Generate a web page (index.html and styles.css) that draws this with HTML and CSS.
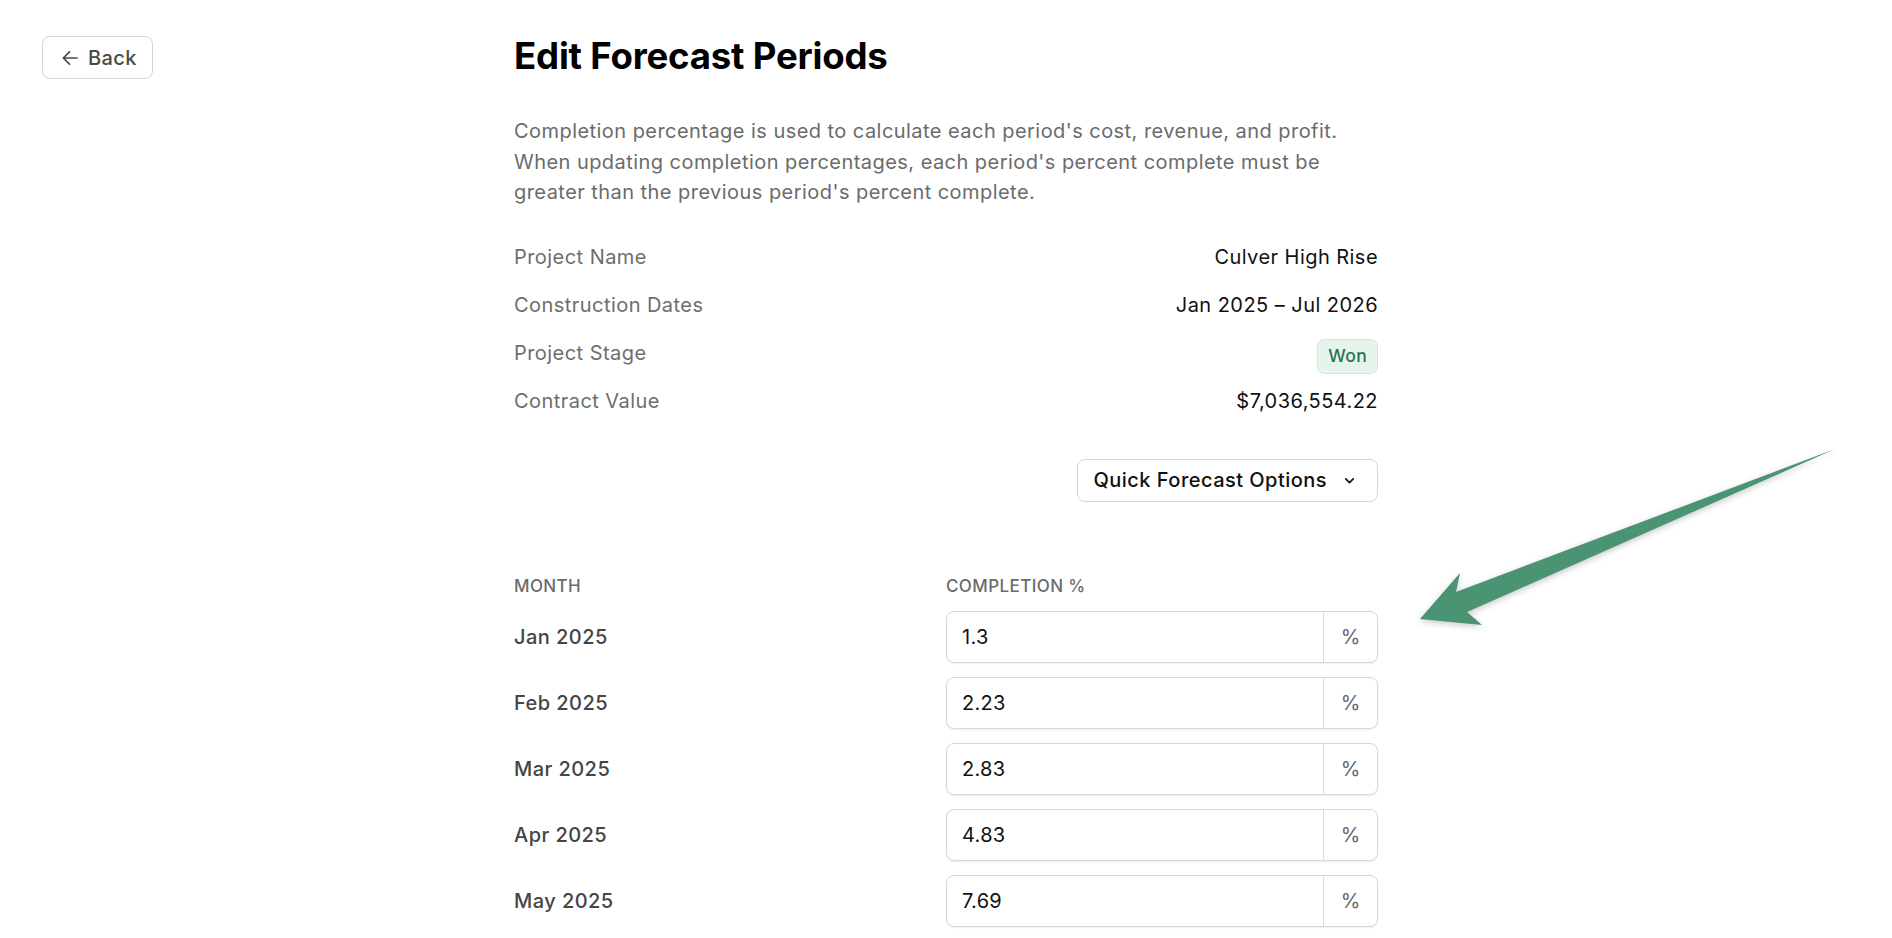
FILE: index.html
```html
<!DOCTYPE html>
<html lang="en">
<head>
<meta charset="utf-8">
<title>Edit Forecast Periods</title>
<link rel="stylesheet" href="styles.css">
</head>
<body>
<div class="page">
  <div class="side">
    <button class="back-btn" type="button">
      <svg class="back-icon" viewBox="0 0 20 20" width="20" height="20" aria-hidden="true"><path d="M17 10H3.5M9.5 3.8L3.3 10l6.2 6.2" fill="none" stroke="currentColor" stroke-width="1.7" stroke-linecap="round" stroke-linejoin="round"/></svg>
      <span>Back</span>
    </button>
  </div>
  <main class="main">
    <h1 class="title">Edit Forecast Periods</h1>
    <p class="desc">Completion percentage is used to calculate each period's cost, revenue, and profit. When updating completion percentages, each period's percent complete must be greater than the previous period's percent complete.</p>
    <dl class="info">
      <div class="info-row"><dt>Project Name</dt><dd>Culver High Rise</dd></div>
      <div class="info-row"><dt>Construction Dates</dt><dd>Jan 2025 – Jul 2026</dd></div>
      <div class="info-row"><dt>Project Stage</dt><dd><span class="badge">Won</span></dd></div>
      <div class="info-row"><dt>Contract Value</dt><dd>$7,036,554.22</dd></div>
    </dl>
    <div class="actions">
      <button class="quick-btn" type="button">
        <span>Quick Forecast Options</span>
        <svg class="chev" viewBox="0 0 16 16" width="17" height="17" aria-hidden="true"><path d="M4.5 6.5L8 10l3.5-3.5" fill="none" stroke="currentColor" stroke-width="1.6" stroke-linecap="round" stroke-linejoin="round"/></svg>
      </button>
    </div>
    <div class="table">
      <div class="thead"><div>Month</div><div>Completion %</div></div>
      <div class="trow"><div class="month">Jan 2025</div><div class="field"><input class="inp" type="text" value="1.3"><span class="suffix">%</span></div></div>
      <div class="trow"><div class="month">Feb 2025</div><div class="field"><input class="inp" type="text" value="2.23"><span class="suffix">%</span></div></div>
      <div class="trow"><div class="month">Mar 2025</div><div class="field"><input class="inp" type="text" value="2.83"><span class="suffix">%</span></div></div>
      <div class="trow"><div class="month">Apr 2025</div><div class="field"><input class="inp" type="text" value="4.83"><span class="suffix">%</span></div></div>
      <div class="trow"><div class="month">May 2025</div><div class="field"><input class="inp" type="text" value="7.69"><span class="suffix">%</span></div></div>
    </div>
  </main>
  <div class="side"></div>
</div>
<svg class="annot" viewBox="0 0 1892 938" width="1892" height="938" aria-hidden="true">
  <polygon points="1835,449 1467,612 1482,625 1420,619 1460,573 1456,592" fill="#4a9474"/>
</svg>
</body>
</html>
```

FILE: styles.css
```css
* { box-sizing: border-box; }
html, body { margin: 0; padding: 0; background: #fff; }
body {
  font-family: Inter, "Noto Sans", "Liberation Sans", sans-serif;
  color: #111;
  position: relative;
  overflow: hidden;
  height: 938px;
}
.page {
  display: grid;
  grid-template-columns: 1fr 864px 1fr;
}
.side { padding: 36px 0 0 42px; }
.back-btn {
  display: inline-flex;
  align-items: center;
  gap: 8px;
  height: 43px;
  padding: 0 15px 0 17px;
  border: 1px solid #d6d6d6;
  border-radius: 8px;
  background: #fff;
  color: #4a4a4a;
  font-family: inherit;
  font-size: 20px;
  letter-spacing: 0.4px;
  font-weight: 500;
}
.back-icon { display: block; }
.main { padding-top: 34px; }
.title {
  margin: 0;
  font-size: 36.6px;
  line-height: 44px;
  font-weight: 700;
  color: #000;
  letter-spacing: -0.2px;
}
.desc {
  margin: 38px 0 0;
  font-size: 20px;
  line-height: 30.5px;
  letter-spacing: 0.45px;
  color: #6b6b6b;
}
.info { margin: 26px 0 0; padding: 0; }
.info-row {
  display: flex;
  justify-content: space-between;
  align-items: center;
  height: 48px;
  font-size: 20px;
  line-height: 28.8px;
  letter-spacing: 0.45px;
}
.info-row dt { color: #6e6e6e; }
.info-row dd { margin: 0; color: #111; }
.badge {
  display: inline-flex;
  align-items: center;
  height: 35px;
  padding: 0 10px;
  margin-top: 5px;
  border-radius: 7px;
  background: #e5f5ec;
  border: 1px solid #cfeadb;
  color: #2f7154;
  font-size: 17.5px;
  letter-spacing: 0.3px;
  font-weight: 500;
}
.actions {
  display: flex;
  justify-content: flex-end;
  margin-top: 33px;
}
.quick-btn {
  display: inline-flex;
  align-items: center;
  gap: 14px;
  height: 43px;
  padding: 0 19px 0 15px;
  border: 1px solid #d6d6d6;
  border-radius: 8px;
  background: #fff;
  color: #111;
  font-family: inherit;
  font-size: 20px;
  letter-spacing: 0.47px;
  font-weight: 500;
}
.chev { display: block; }
.table { margin-top: 72px; }
.thead {
  display: grid;
  grid-template-columns: 1fr 1fr;
  font-size: 17px;
  line-height: 24px;
  letter-spacing: 0.4px;
  font-weight: 500;
  text-transform: uppercase;
  color: #6b6b6b;
  margin-bottom: 13px;
}
.trow {
  display: grid;
  grid-template-columns: 1fr 1fr;
  align-items: center;
  margin-bottom: 14px;
}
.month {
  font-size: 20px;
  letter-spacing: 0.45px;
  font-weight: 500;
  color: #454545;
}
.field {
  display: flex;
  height: 52px;
  border: 1px solid #d8d8d8;
  border-radius: 8px;
  box-shadow: 0 1px 2px rgba(0,0,0,0.07);
  overflow: hidden;
  background: #fff;
}
.inp {
  flex: 1;
  min-width: 0;
  border: 0;
  outline: none;
  padding: 0 15px;
  font-family: inherit;
  font-size: 20px;
  letter-spacing: 0.3px;
  color: #111;
  background: transparent;
}
.suffix {
  width: 54px;
  display: flex;
  align-items: center;
  justify-content: center;
  border-left: 1px solid #dcdcdc;
  color: #666;
  font-size: 20px;
}
.annot {
  position: absolute;
  left: 0;
  top: 0;
  pointer-events: none;
  filter: drop-shadow(0 2px 3px rgba(0,0,0,0.22));
}
```
